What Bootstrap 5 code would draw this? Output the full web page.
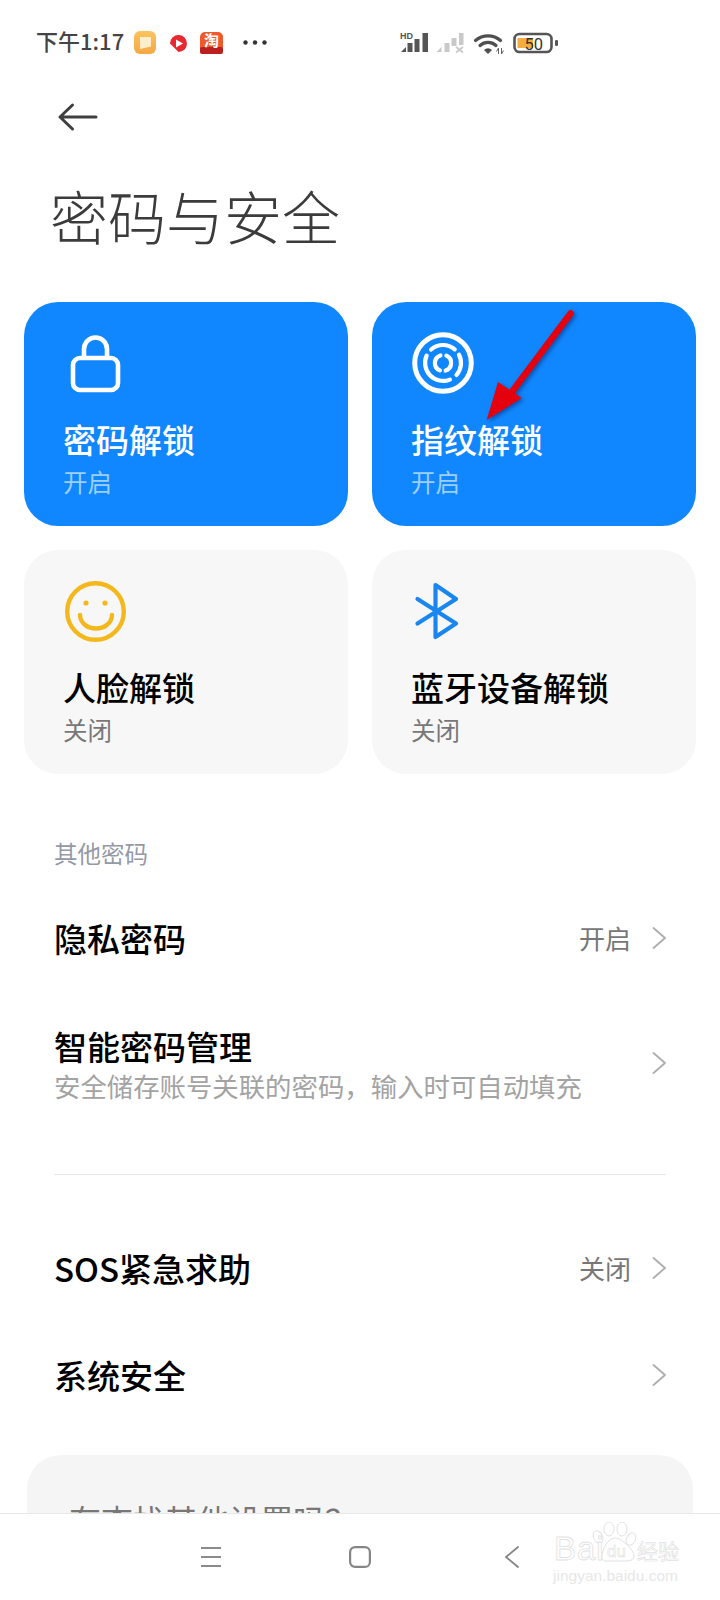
<!DOCTYPE html>
<html lang="zh">
<head>
    <meta charset="utf-8">
    <title>密码与安全</title>
    <meta name="viewport" content="width=device-width, initial-scale=1">
    <link href="https://cdn.jsdelivr.net/npm/bootstrap@5.3.6/dist/css/bootstrap.min.css" rel="stylesheet">
    <style>
        body { width: 720px; height: 1600px; overflow: hidden; background: #fff; font-family: "Noto Sans CJK SC", "Liberation Sans", sans-serif; color: #000; }
        .phone { position: relative; height: 1600px; overflow: hidden; }
        .status-bar { height: 86px; padding-left: 36px; color: #444; }
        .clock { width: 98px; margin-bottom: 5px; font-size: 22px; font-weight: 500; white-space: nowrap; }
        .status-right { margin-left: 130px; }
        .status-bar svg { display: block; }
        .back-row { height: 62px; padding-left: 57px; }
        .page-title { margin: 17px 0 0 50px; font-size: 58px; line-height: 100px; font-weight: 300; color: #3b3b3b; }
        .tiles { margin-top: 37px; }
        .tile { height: 224px; border-radius: 34px; padding: 31px 0 0 39px; background: #f7f7f7; }
        .tile-on { background: #1187ff; color: #fff; }
        .tile svg { display: block; overflow: visible; margin-left: -1px; }
        .tile-name { margin-top: 22px; font-size: 33px; line-height: 44px; font-weight: 500; }
        .tile-state { margin-top: 3px; font-size: 24.5px; line-height: 36px; color: #777; }
        .tile-on .tile-state { color: #9ccfff; }
        .group-label { margin: 59px 54px 11px; font-size: 23.5px; line-height: 40px; color: #9499a6; }
        .set-row { min-height: 107px; padding: 0 54px; }
        .set-row.tall { min-height: 144px; }
        .set-name { font-size: 33px; line-height: 44px; font-weight: 500; }
        .set-desc { font-size: 26.4px; line-height: 34px; color: #a3a3a3; margin-top: 1px; white-space: nowrap; }
        .set-value { font-size: 26px; color: #777; margin-right: 21px; }
        .divider { margin: 39px 54px 39px; height: 1px; background: #e6e6e6; }
        .more-card { margin: 27px 27px 0 27px; height: 200px; background: #f5f5f5; border-radius: 34px; padding: 40px 42px; font-size: 32px; line-height: 48px; color: #777; }
        .bottom-nav { position: absolute; left: 0; right: 0; top: 1513px; height: 87px; background: #fff; border-top: 1px solid #e8e8e8; padding-left: 201px; }
        .nav-home { margin-left: 128px; }
        .nav-back { margin-left: 134px; }
        .red-arrow { position: absolute; left: 480px; top: 305px; overflow: visible; filter: drop-shadow(2px 2px 2px rgba(0, 0, 50, .4)); }
        .wm { position: absolute; left: 553px; top: 1522px; width: 130px; height: 64px; }
        .wm svg { position: absolute; left: 0; top: 0; }
        .wm-baidu { position: absolute; left: 1px; top: 12px; font: 400 33px/30px "Liberation Sans", sans-serif; letter-spacing: 1px; color: #fff; -webkit-text-stroke: .8px #e2e2e2; white-space: nowrap; }
        .wm-du { position: absolute; left: 54px; top: 20px; font: 400 17px/20px "Liberation Sans", sans-serif; color: #fff; -webkit-text-stroke: .6px #e2e2e2; white-space: nowrap; }
        .wm-cn { position: absolute; left: 84px; top: 15px; font: 400 21px/26px "Noto Sans CJK SC", sans-serif; color: #fff; -webkit-text-stroke: .7px #e2e2e2; white-space: nowrap; }
        .wm-jy { position: absolute; left: 0; top: 45px; font: 15.5px/18px "Liberation Sans", sans-serif; color: #e8e8e8; white-space: nowrap; }
    </style>
</head>
<body>
<div class="phone">
    <div class="status-bar d-flex align-items-center">
        <span class="clock">下午1:17</span>
        <svg width="134" height="26" viewBox="134 30 134 26">
            <defs><linearGradient id="msgBg" x1="0" y1="0" x2="0" y2="1"><stop offset="0" stop-color="#fbc35f"/><stop offset="1" stop-color="#f6a843"/></linearGradient></defs>
            <rect x="134" y="31" width="22" height="23" rx="6" fill="url(#msgBg)"/>
            <path d="M140 37H151V46.500L140 49Z" fill="#fdeecb"/>
            <path d="M178.500 35A8.500 8.500 0 0 1 178.500 52L170 43.500A8.500 8.500 0 0 1 178.500 35Z" fill="#e8272f"/>
            <path d="M176 39.500 183 43.500 176 47.500Z" fill="#fff"/>
            <rect x="200" y="32" width="23" height="22" rx="5" fill="#ee5a2a"/>
            <rect x="200" y="47" width="23" height="7" rx="2" fill="#b9201f"/>
            <text x="211.500" y="46" font-size="15" font-weight="700" fill="#fff" text-anchor="middle" font-family="Noto Sans CJK SC, sans-serif">淘</text>
            <circle cx="245.500" cy="42.500" r="2.200" fill="#333"/><circle cx="255" cy="42.500" r="2.200" fill="#333"/><circle cx="264.500" cy="42.500" r="2.200" fill="#333"/>
        </svg>
        <svg class="status-right" width="162" height="26" viewBox="398 30 162 26">
            <text x="400" y="39" font-size="9" font-weight="700" fill="#555" font-family="Liberation Sans, sans-serif">HD</text>
            <g fill="#555"><path d="M401 52 406 47V52Z"/><rect x="407.500" y="43" width="5" height="9"/><rect x="414.500" y="39" width="5" height="13"/><rect x="422.500" y="33" width="5.500" height="19"/></g>
            <g fill="#c9c9c9"><path d="M436.500 52 441.500 47V52Z"/><rect x="444.500" y="43" width="5" height="9"/><rect x="451.500" y="38" width="5" height="8"/><rect x="459" y="33" width="4.500" height="12"/></g>
            <path d="M456 47 463 52.500M463 47 456 52.500" stroke="#c9c9c9" stroke-width="1.800" fill="none"/>
            <g fill="none" stroke="#4f4f4f" stroke-width="3.200" stroke-linecap="round"><path d="M475.500 40.500A19 19 0 0 1 500.500 40.500"/><path d="M480 45.500A12 12 0 0 1 496 45.500"/></g>
            <path d="M484 50A5.500 5.500 0 0 1 492 50L488 54Z" fill="#4f4f4f"/>
            <path d="M498.500 48V54M496.500 51.500 498.500 48M501.500 48V54M503.500 50.500 501.500 54" stroke="#666" stroke-width="1" fill="none"/>
            <rect x="514.500" y="34" width="37" height="18" rx="5" fill="none" stroke="#555" stroke-width="2.600"/>
            <rect x="517.500" y="38" width="15.500" height="10" fill="#f3ad3e"/>
            <text x="524.500" y="49.500" font-size="16.500" fill="#333" font-family="Roboto, sans-serif">50</text>
            <rect x="555" y="40" width="3" height="6" rx="1.200" fill="#555"/>
        </svg>
    </div>
    <div class="back-row d-flex align-items-center">
        <svg width="42" height="30" viewBox="0 0 42 30" fill="none" stroke="#3f3f3f" stroke-width="3" stroke-linecap="round" stroke-linejoin="round"><path d="M3 15H39M15.500 3 3 15 15.500 27"/></svg>
    </div>
    <div class="page-title">密码与安全</div>

    <div class="container-fluid px-4 tiles">
        <div class="row g-4">
            <div class="col-6">
                <div class="tile tile-on">
                    <svg width="64" height="62" viewBox="0 0 64 62" fill="none" stroke="#fff" stroke-width="4.600"><rect x="11" y="25" width="45" height="32" rx="7"/><path d="M22 25V16a11.500 11.500 0 0 1 23 0V25"/></svg>
                    <div class="tile-name">密码解锁</div>
                    <div class="tile-state">开启</div>
                </div>
            </div>
            <div class="col-6">
                <div class="tile tile-on">
                    <svg width="64" height="62" viewBox="0 0 64 62" fill="none" stroke="#fff" stroke-width="4.200" stroke-linecap="round"><circle cx="33" cy="30" r="28.300" stroke-width="5"/><path d="M21.100 16.500A18 18 0 0 1 44.700 16.300M16.600 22.700A18 18 0 0 0 39.900 46.600M46.500 41.900A18 18 0 0 0 49 21.700"/><path d="M30.400 22.400A8 8 0 0 0 29.900 37.400M36.400 22.700A8 8 0 0 1 35.600 37.600"/></svg>
                    <div class="tile-name">指纹解锁</div>
                    <div class="tile-state">开启</div>
                </div>
            </div>
            <div class="col-6">
                <div class="tile">
                    <svg width="64" height="62" viewBox="0 0 64 62" fill="none" stroke="#f4b81c" stroke-width="4.400" stroke-linecap="round"><circle cx="33.500" cy="30.500" r="28.300"/><path d="M18 34C19 52 49 52 50 34"/><circle cx="24" cy="22" r="2.600" fill="#f4b81c" stroke="none"/><circle cx="43" cy="22" r="2.600" fill="#f4b81c" stroke="none"/></svg>
                    <div class="tile-name">人脸解锁</div>
                    <div class="tile-state">关闭</div>
                </div>
            </div>
            <div class="col-6">
                <div class="tile">
                    <svg width="64" height="62" viewBox="0 0 64 62" fill="none" stroke="#1a87f0" stroke-width="4.200" stroke-linecap="round" stroke-linejoin="round"><path d="M7.500 18 46 42.500 25.500 56V4L46 18 7.500 42.500"/></svg>
                    <div class="tile-name">蓝牙设备解锁</div>
                    <div class="tile-state">关闭</div>
                </div>
            </div>
        </div>
    </div>

    <div class="group-label">其他密码</div>

    <div class="set-row d-flex align-items-center">
        <div class="set-name flex-grow-1">隐私密码</div>
        <span class="set-value">开启</span>
        <svg width="14" height="22" viewBox="0 0 14 22" fill="none" stroke="#adadad" stroke-width="1.800" stroke-linecap="round" stroke-linejoin="round"><path d="M1.500 1 13 11 1.500 21"/></svg>
    </div>
    <div class="set-row tall d-flex align-items-center">
        <div class="flex-grow-1">
            <div class="set-name">智能密码管理</div>
            <div class="set-desc">安全储存账号关联的密码，输入时可自动填充</div>
        </div>
        <svg width="14" height="22" viewBox="0 0 14 22" fill="none" stroke="#adadad" stroke-width="1.800" stroke-linecap="round" stroke-linejoin="round"><path d="M1.500 1 13 11 1.500 21"/></svg>
    </div>

    <div class="divider"></div>

    <div class="set-row d-flex align-items-center">
        <div class="set-name flex-grow-1">SOS紧急求助</div>
        <span class="set-value">关闭</span>
        <svg width="14" height="22" viewBox="0 0 14 22" fill="none" stroke="#adadad" stroke-width="1.800" stroke-linecap="round" stroke-linejoin="round"><path d="M1.500 1 13 11 1.500 21"/></svg>
    </div>
    <div class="set-row d-flex align-items-center">
        <div class="set-name flex-grow-1">系统安全</div>
        <svg width="14" height="22" viewBox="0 0 14 22" fill="none" stroke="#adadad" stroke-width="1.800" stroke-linecap="round" stroke-linejoin="round"><path d="M1.500 1 13 11 1.500 21"/></svg>
    </div>

    <div class="more-card">有查找其他设置吗？</div>

    <!-- annotation drawn on top of the screenshot -->
    <svg class="red-arrow" width="100" height="120" viewBox="0 0 100 120"><path d="M90.700 8.300 28 92" stroke="#e4000c" stroke-width="6.500" stroke-linecap="round" fill="none"/><path d="M6.700 115 18 77 41.700 93Z" fill="#e4000c"/></svg>

    <div class="bottom-nav d-flex align-items-center">
        <svg width="20" height="22" viewBox="0 0 20 22" fill="none" stroke="#8b8b8b" stroke-width="1.800"><path d="M0 2H20M0 11H20M0 20H20"/></svg>
        <svg class="nav-home" width="22" height="22" viewBox="0 0 22 22" fill="none" stroke="#858585" stroke-width="2.200"><rect x="1.100" y="1.100" width="19.800" height="19.800" rx="5"/></svg>
        <svg class="nav-back" width="14" height="22" viewBox="0 0 14 22" fill="none" stroke="#858585" stroke-width="1.800" stroke-linecap="round" stroke-linejoin="round"><path d="M13 1 1 11 13 21"/></svg>
    </div>

    <!-- baidu watermark -->
    <div class="wm">
        <svg width="130" height="64" viewBox="553 1522 130 64" fill="#fff" stroke="#e2e2e2" stroke-width="1">
            <ellipse cx="598" cy="1537" rx="4.500" ry="6.500" transform="rotate(-25 598 1537)"/>
            <ellipse cx="609" cy="1529" rx="5" ry="7"/>
            <ellipse cx="622" cy="1529" rx="5" ry="7"/>
            <ellipse cx="631" cy="1539" rx="4.500" ry="6.500" transform="rotate(25 631 1539)"/>
            <path d="M615 1538C622 1538 634 1550 634 1556 634 1562 626 1561 615 1561 604 1561 602 1562 602 1556 602 1550 608 1538 615 1538Z"/>
        </svg>
        <span class="wm-baidu">Bai</span>
        <span class="wm-du">du</span>
        <span class="wm-cn">经验</span>
        <span class="wm-jy">jingyan.baidu.com</span>
    </div>
</div>
</body>
</html>
